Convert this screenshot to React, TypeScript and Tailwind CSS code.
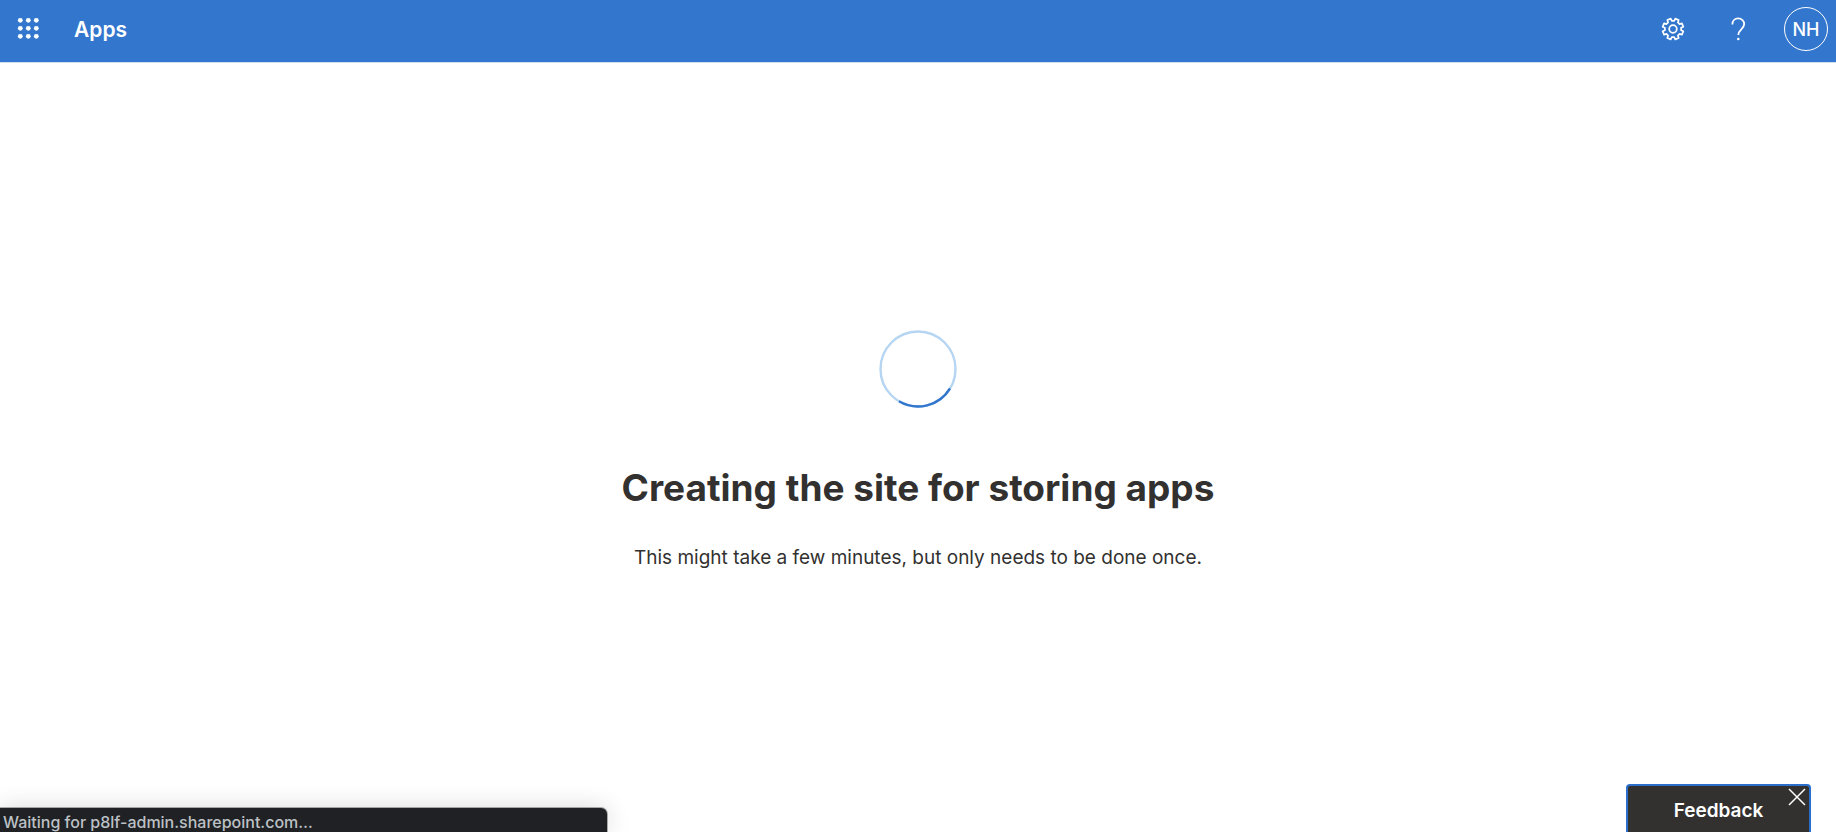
function gearPath(): string {
  const parts: string[] = [];
  const point = (radius: number, degrees: number) => {
    const a = (degrees * Math.PI) / 180;
    return `${(12 + radius * Math.cos(a)).toFixed(2)} ${(12 + radius * Math.sin(a)).toFixed(2)}`;
  };
  for (let i = 0; i < 8; i++) {
    const c = i * 45 + 22.5;
    parts.push(`${i ? "L" : "M"}${point(8.2, c - 14)}`, `L${point(10.6, c - 10)}`, `L${point(10.6, c + 10)}`, `L${point(8.2, c + 14)}`);
  }
  return parts.join("") + "Z";
}

function Header() {
  return (
    <header className="flex h-[63px] items-start border-b border-[#cfdff3] bg-[#3376cd] pr-2 text-white">
      <button aria-label="App launcher" className="flex h-14 w-14 items-center justify-center">
        <svg width="24" height="24" viewBox="0 0 24 24" fill="currentColor">
          {[4, 12, 20].map((y) => [4, 12, 20].map((x) => <circle key={`${x}-${y}`} cx={x + 0.3} cy={y + 0.3} r="2.4" />))}
        </svg>
      </button>
      <a href="#" className="ml-[18px] flex h-[60px] items-center text-[21px] font-semibold">
        Apps
      </a>
      <div className="ml-auto flex h-[58px] items-center">
        <button aria-label="Settings" className="flex w-[62px] justify-center">
          <svg width="24" height="24" viewBox="0 0 24 24" fill="none" stroke="currentColor" strokeWidth="1.7" strokeLinejoin="round">
            <path d={gearPath()} />
            <circle cx="12" cy="12" r="3.8" />
          </svg>
        </button>
        <button aria-label="Help" className="flex w-[68px] justify-center">
          <svg width="24" height="24" viewBox="0 0 24 24" fill="none" stroke="currentColor" strokeWidth="1.8">
            <path d="M6.400 7.400C6.400 3.900 8.800 1.400 12.200 1.400s6 2.500 6 5.700c0 5-5.900 5.700-5.900 10.900" />
            <circle cx="12.300" cy="22" r="1.300" fill="currentColor" stroke="none" />
          </svg>
        </button>
        <button aria-label="Account" className="ml-3 flex h-11 w-11 items-center justify-center rounded-full border border-white pt-px text-lg font-medium">
          NH
        </button>
      </div>
    </header>
  );
}

export default function App() {
  return (
    <div className="relative flex min-h-screen flex-col overflow-hidden bg-white font-['Inter','Liberation_Sans',sans-serif]">
      <Header />
      <main className="flex grow flex-col items-center justify-center pt-1.5 text-[#323130]">
        <svg role="img" aria-label="Loading" width="78" height="78" viewBox="0 0 78 78" fill="none" strokeWidth="2.4">
          <circle cx="39" cy="39" r="37.5" stroke="#b5d5f2" />
          <path d="M71 58.500A37.500 37.500 0 0 1 20 71.300" stroke="#3376cd" />
        </svg>
        <h1 className="mt-14 text-[37px] leading-12 font-bold">Creating the site for storing apps</h1>
        <p className="mt-8 text-[19px] leading-7">This might take a few minutes, but only needs to be done once.</p>
      </main>
      <div role="status" className="absolute bottom-0 left-0 h-6 w-[607px] rounded-tr-md bg-[#202124] pl-[3px] text-base leading-7 font-medium text-[#bdc1c6] shadow-[0_0_24px_rgba(0,0,0,0.16),0_0_0_1px_rgba(0,0,0,0.3)]">
        Waiting for p8lf-admin.sharepoint.com…
      </div>
      <div className="absolute right-[25px] bottom-0 flex h-12 w-[185px] rounded-t-sm border-2 border-b-0 border-[#2b6fcb] bg-[#323130] text-white">
        <button className="grow pt-1 text-[19px] font-semibold">Feedback</button>
        <button aria-label="Close" className="absolute top-0.5 right-[3px]">
          <svg width="18" height="18" viewBox="0 0 18 18" fill="none" stroke="currentColor" strokeWidth="1.5">
            <path d="M1 1l16 16M17 1L1 17" />
          </svg>
        </button>
      </div>
    </div>
  );
}
